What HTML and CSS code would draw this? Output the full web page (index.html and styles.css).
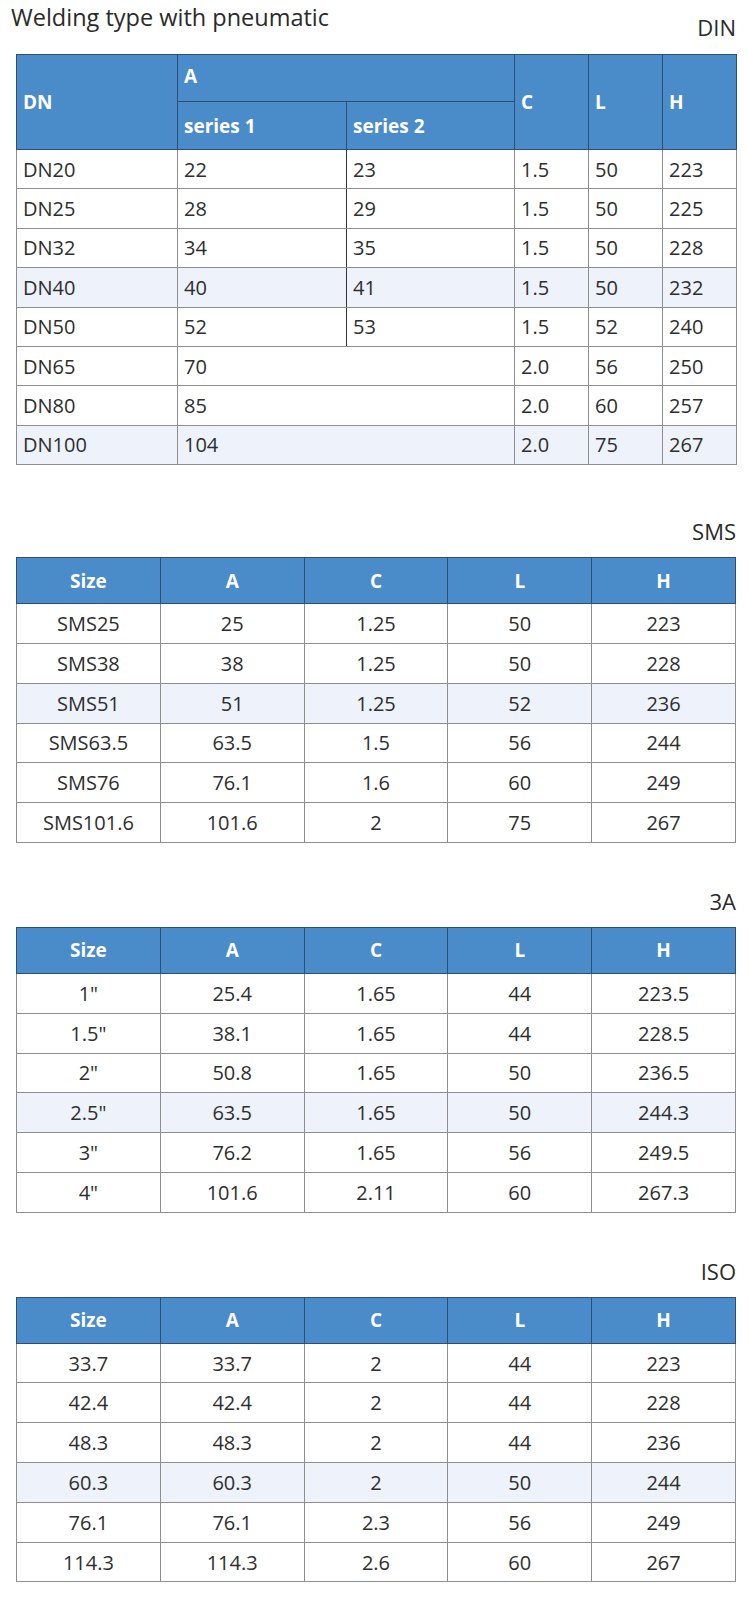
FILE: index.html
```html
<!DOCTYPE html>
<html>
<head>
<meta charset="utf-8">
<link rel="stylesheet" href="styles.css">
</head>
<body>
<div class="page">
  <section class="block block-first">
    <div class="head">
      <h1 class="title">Welding type with pneumatic</h1>
      <span class="std std-first">DIN</span>
    </div>
    <table class="grid din">
      <colgroup>
        <col class="c-dn"><col class="c-s1"><col class="c-s2"><col class="c-c"><col class="c-l"><col class="c-h">
      </colgroup>
      <thead>
        <tr class="hr1">
          <th rowspan="2">DN</th>
          <th colspan="2" class="th-a">A</th>
          <th rowspan="2">C</th>
          <th rowspan="2">L</th>
          <th rowspan="2">H</th>
        </tr>
        <tr class="hr2">
          <th>series 1</th>
          <th>series 2</th>
        </tr>
      </thead>
      <tbody>
        <tr><td>DN20</td><td class="s1">22</td><td>23</td><td>1.5</td><td>50</td><td>223</td></tr>
        <tr><td>DN25</td><td class="s1">28</td><td>29</td><td>1.5</td><td>50</td><td>225</td></tr>
        <tr><td>DN32</td><td class="s1">34</td><td>35</td><td>1.5</td><td>50</td><td>228</td></tr>
        <tr class="hl"><td>DN40</td><td class="s1">40</td><td>41</td><td>1.5</td><td>50</td><td>232</td></tr>
        <tr><td>DN50</td><td class="s1">52</td><td>53</td><td>1.5</td><td>52</td><td>240</td></tr>
        <tr><td>DN65</td><td colspan="2">70</td><td>2.0</td><td>56</td><td>250</td></tr>
        <tr><td>DN80</td><td colspan="2">85</td><td>2.0</td><td>60</td><td>257</td></tr>
        <tr class="hl"><td>DN100</td><td colspan="2">104</td><td>2.0</td><td>75</td><td>267</td></tr>
      </tbody>
    </table>
  </section>

  <section class="block block-sms">
    <div class="head"><span class="std">SMS</span></div>
    <table class="grid simple">
      <thead><tr><th>Size</th><th>A</th><th>C</th><th>L</th><th>H</th></tr></thead>
      <tbody>
        <tr><td>SMS25</td><td>25</td><td>1.25</td><td>50</td><td>223</td></tr>
        <tr><td>SMS38</td><td>38</td><td>1.25</td><td>50</td><td>228</td></tr>
        <tr class="hl"><td>SMS51</td><td>51</td><td>1.25</td><td>52</td><td>236</td></tr>
        <tr><td>SMS63.5</td><td>63.5</td><td>1.5</td><td>56</td><td>244</td></tr>
        <tr><td>SMS76</td><td>76.1</td><td>1.6</td><td>60</td><td>249</td></tr>
        <tr><td>SMS101.6</td><td>101.6</td><td>2</td><td>75</td><td>267</td></tr>
      </tbody>
    </table>
  </section>

  <section class="block">
    <div class="head"><span class="std">3A</span></div>
    <table class="grid simple">
      <thead><tr><th>Size</th><th>A</th><th>C</th><th>L</th><th>H</th></tr></thead>
      <tbody>
        <tr><td>1"</td><td>25.4</td><td>1.65</td><td>44</td><td>223.5</td></tr>
        <tr><td>1.5"</td><td>38.1</td><td>1.65</td><td>44</td><td>228.5</td></tr>
        <tr><td>2"</td><td>50.8</td><td>1.65</td><td>50</td><td>236.5</td></tr>
        <tr class="hl"><td>2.5"</td><td>63.5</td><td>1.65</td><td>50</td><td>244.3</td></tr>
        <tr><td>3"</td><td>76.2</td><td>1.65</td><td>56</td><td>249.5</td></tr>
        <tr><td>4"</td><td>101.6</td><td>2.11</td><td>60</td><td>267.3</td></tr>
      </tbody>
    </table>
  </section>

  <section class="block">
    <div class="head"><span class="std">ISO</span></div>
    <table class="grid simple">
      <thead><tr><th>Size</th><th>A</th><th>C</th><th>L</th><th>H</th></tr></thead>
      <tbody>
        <tr><td>33.7</td><td>33.7</td><td>2</td><td>44</td><td>223</td></tr>
        <tr><td>42.4</td><td>42.4</td><td>2</td><td>44</td><td>228</td></tr>
        <tr><td>48.3</td><td>48.3</td><td>2</td><td>44</td><td>236</td></tr>
        <tr class="hl"><td>60.3</td><td>60.3</td><td>2</td><td>50</td><td>244</td></tr>
        <tr><td>76.1</td><td>76.1</td><td>2.3</td><td>56</td><td>249</td></tr>
        <tr><td>114.3</td><td>114.3</td><td>2.6</td><td>60</td><td>267</td></tr>
      </tbody>
    </table>
  </section>
</div>
</body>
</html>
```
FILE: styles.css
```css
html, body {
  margin: 0;
  padding: 0;
  background: #ffffff;
}

body {
  font-family: "Open Sans", "Noto Sans", "Liberation Sans", sans-serif;
  color: #2e2e2e;
}

.page {
  width: 720px;
  padding: 2px 13px 0 16px;
}

.block {
  display: flex;
  flex-direction: column;
  margin-top: 44px;
}

.block-first {
  margin-top: 0;
}

.block-sms {
  margin-top: 52px;
}

.head {
  display: flex;
  justify-content: space-between;
  align-items: flex-start;
  margin-bottom: 12px;
}

.title {
  margin: 0 0 0 -5px;
  font-size: 23.5px;
  line-height: 30px;
  font-weight: 400;
  color: #2a2a2a;
}

.std {
  margin-left: auto;
  font-size: 22px;
  line-height: 28px;
  color: #2a2a2a;
}

.std-first {
  padding-top: 11px;
}

.block-first .head {
  margin-bottom: 13px;
}

.grid {
  width: 720px;
  border-collapse: collapse;
  table-layout: fixed;
  font-size: 20px;
}

.grid th {
  background: #4a8bca;
  color: #ffffff;
  font-weight: 700;
  font-size: 19px;
  border: 1px solid #2f4f72;
  padding: 0 6px;
}

.grid td {
  border: 1px solid #8e8e8e;
  padding: 0 6px;
  vertical-align: middle;
  white-space: nowrap;
}

.grid tr.hl td {
  background: #edf2fb;
}

/* DIN table */
.din .c-dn { width: 161px; }
.din .c-s1 { width: 169px; }
.din .c-s2 { width: 168px; }
.din .c-c { width: 74px; }
.din .c-l { width: 74px; }
.din .c-h { width: 74px; }

.din th {
  text-align: left;
}

.din thead tr.hr1 { height: 47px; }
.din thead tr.hr2 { height: 48px; }
.din .th-a { vertical-align: top; padding-top: 8px; }

.din tbody tr { height: 39.4px; }
.din td { text-align: left; }
.din td.s1 { border-right-color: #333333; }

/* simple tables */
.simple th,
.simple td {
  text-align: center;
}

.simple thead tr { height: 46px; }
.simple tbody tr { height: 39.8px; }
```
